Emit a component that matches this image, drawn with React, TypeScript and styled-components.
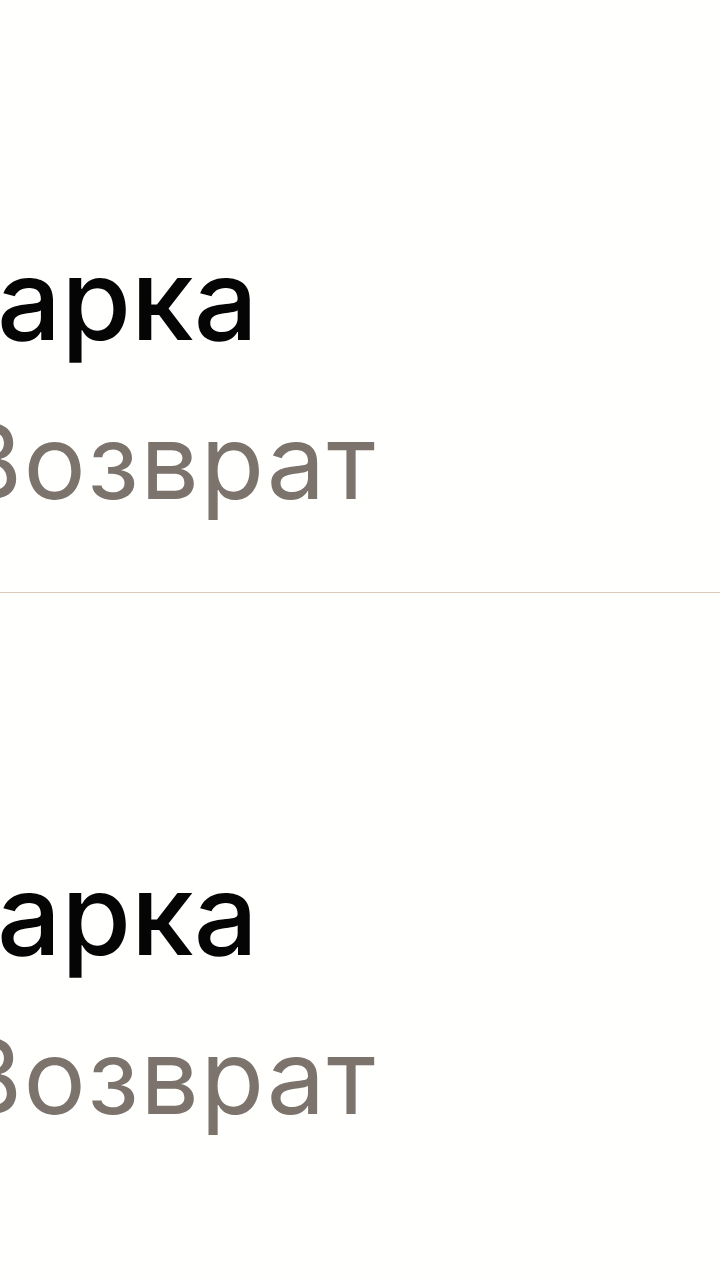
import React from "react";
import styled, { createGlobalStyle } from "styled-components";

const GlobalStyle = createGlobalStyle`
  html, body {
    margin: 0;
    padding: 0;
    background: #fffffd;
  }
  body {
    font-family: Inter, "Noto Sans", "Liberation Sans", sans-serif;
    -webkit-font-smoothing: antialiased;
  }
`;

const Page = styled.div`
  width: 720px;
  height: 1280px;
  overflow: hidden;
  background: #fffffd;
`;

const List = styled.ul`
  list-style: none;
  margin: 0;
  padding: 0;
  display: flex;
  flex-direction: column;
`;

const Item = styled.li<{ $last?: boolean }>`
  display: flex;
  flex-direction: column;
  padding: 254px 0 66px;
  border-bottom: 1px solid ${({ $last }) => ($last ? "transparent" : "#d8cab7")};
  overflow: hidden;

  &:first-child {
    padding-top: 232px;
  }
`;

const Title = styled.span`
  font-size: 113px;
  line-height: 134px;
  font-weight: 500;
  color: #050505;
  white-space: nowrap;
  margin-left: -3px;
`;

const Subtitle = styled.span`
  margin-top: 30px;
  margin-left: -46px;
  font-size: 104px;
  line-height: 130px;
  font-weight: 400;
  letter-spacing: 1.5px;
  color: #7b736c;
  white-space: nowrap;
`;

const items = [
  { title: "арка", subtitle: "Возврат" },
  { title: "арка", subtitle: "Возврат" },
];

const App: React.FC = () => {
  return (
    <Page>
      <GlobalStyle />
      <List>
        {items.map((item, i) => (
          <Item key={i} $last={i === items.length - 1}>
            <Title>{item.title}</Title>
            <Subtitle>{item.subtitle}</Subtitle>
          </Item>
        ))}
      </List>
    </Page>
  );
};

export default App;
